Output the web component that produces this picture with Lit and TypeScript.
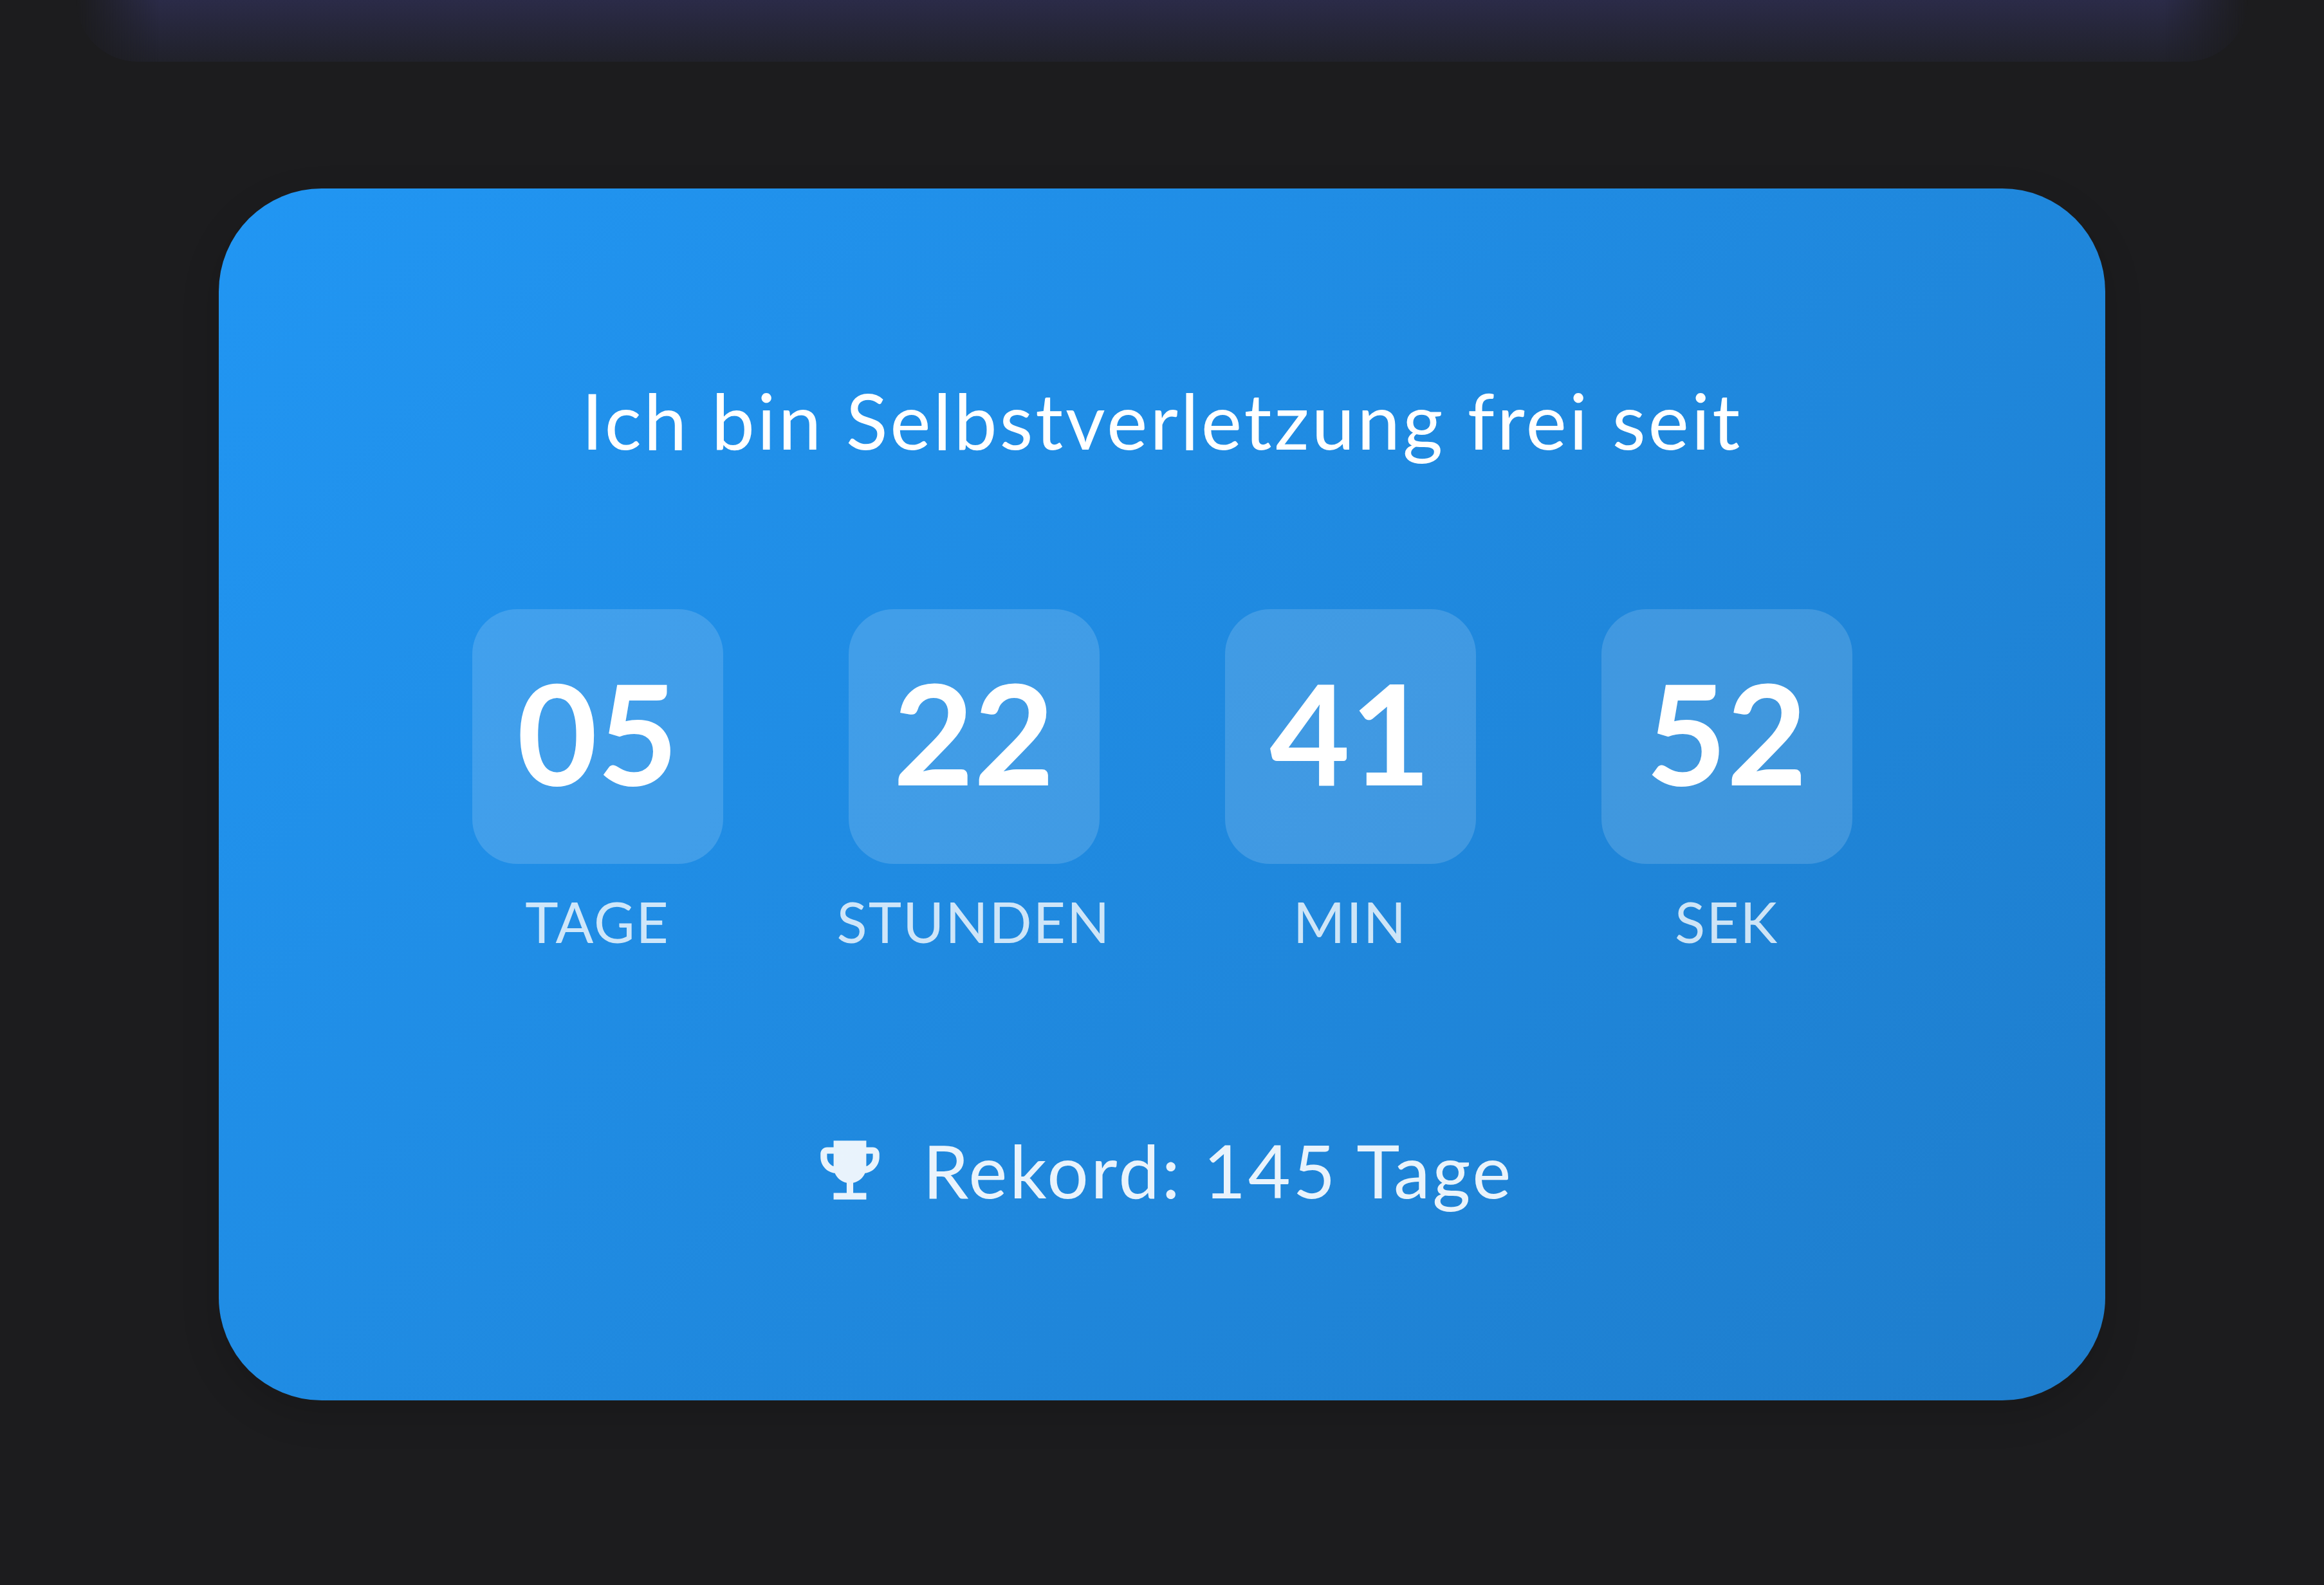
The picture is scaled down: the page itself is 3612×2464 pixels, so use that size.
import { LitElement, html, css } from "lit";
import { customElement } from "lit/decorators.js";

const UNITS = [
  ["05", "TAGE"],
  ["22", "STUNDEN"],
  ["41", "MIN"],
  ["52", "SEK"],
];

@customElement("app-root")
export class AppRoot extends LitElement {
  static styles = css`
    :host {
      display: block;
      min-height: 2464px;
      background: #1c1c1e;
      font-family: "Lato", "Noto Sans", sans-serif;
      overflow: hidden;
    }
    .page { display: flex; flex-direction: column; align-items: center; }
    .strip {
      width: 3376px;
      height: 96px;
      border-radius: 0 0 160px 160px;
      background: linear-gradient(180deg, #2b2b48 0%, #20212a 100%);
      -webkit-mask-image: linear-gradient(90deg, transparent, #000 130px, #000 calc(100% - 130px), transparent);
      mask-image: linear-gradient(90deg, transparent, #000 130px, #000 calc(100% - 130px), transparent);
    }
    .card {
      margin-top: 197px;
      width: 2932px;
      height: 1884px;
      box-sizing: border-box;
      border-radius: 160px;
      background: linear-gradient(135deg, #2196f3, #1e7dcc);
      box-shadow: 0 20px 60px rgba(0, 0, 0, 0.15);
      display: flex;
      flex-direction: column;
      align-items: center;
      padding-top: 288px;
      color: #fff;
    }
    .title { font-size: 120px; line-height: 144px; letter-spacing: 3.8px; white-space: nowrap; }
    .row {
      margin-top: 222px;
      display: grid;
      grid-template-columns: repeat(4, 390px);
      column-gap: 195px;
    }
    .unit { display: flex; flex-direction: column; align-items: center; }
    .box {
      width: 390px;
      height: 396px;
      box-sizing: border-box;
      padding-bottom: 16px;
      border-radius: 70px;
      background: rgba(255, 255, 255, 0.15);
      display: flex;
      align-items: center;
      justify-content: center;
      font-size: 216px;
      font-weight: 700;
    }
    .label {
      margin-top: 38px;
      font-size: 87px;
      line-height: 104px;
      letter-spacing: 2px;
      white-space: nowrap;
      color: rgba(255, 255, 255, 0.78);
    }
    .record {
      margin-top: 266px;
      display: flex;
      align-items: center;
      gap: 52px;
      font-size: 114px;
      line-height: 136px;
      letter-spacing: 3.5px;
      color: rgba(255, 255, 255, 0.9);
    }
    .record svg { width: 122px; height: 122px; fill: currentColor; flex: none; }
  `;

  render() {
    return html`
      <div class="page">
        <div class="strip"></div>
        <div class="card">
          <div class="title">Ich bin Selbstverletzung frei seit</div>
          <div class="row">
            ${UNITS.map(
              ([n, l]) => html`<div class="unit">
                <div class="box">${n}</div>
                <div class="label">${l}</div>
              </div>`
            )}
          </div>
          <div class="record">
            <svg viewBox="0 0 24 24"><path d="M19 5h-2V3H7v2H5c-1.1 0-2 .9-2 2v1c0 2.55 1.92 4.63 4.39 4.94.63 1.5 1.98 2.63 3.61 2.96V19H7v2h10v-2h-4v-3.1c1.63-.33 2.98-1.46 3.61-2.96C19.08 12.63 21 10.55 21 8V7c0-1.1-.9-2-2-2zM5 8V7h2v3.82C5.84 10.4 5 9.3 5 8zm14 0c0 1.3-.84 2.4-2 2.82V7h2v1z"/></svg>
            <span>Rekord: 145 Tage</span>
          </div>
        </div>
      </div>
    `;
  }
}
